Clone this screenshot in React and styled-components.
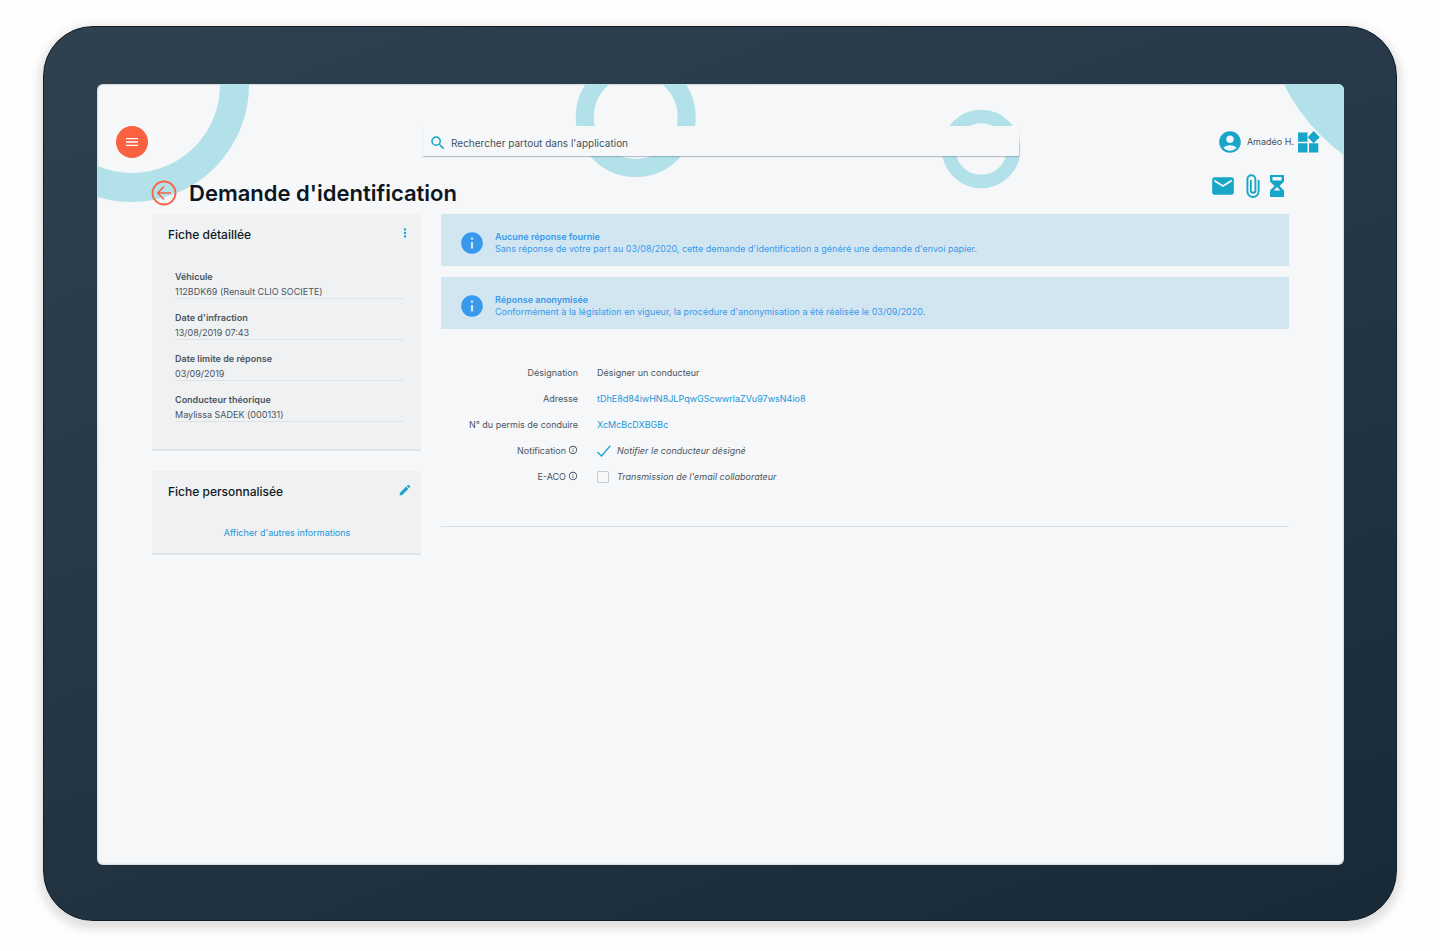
import React from "react";
import styled, { createGlobalStyle } from "styled-components";
import {
  MdAccountCircle,
  MdEdit,
  MdEmail,
  MdInfo,
  MdInfoOutline,
  MdMenu,
  MdMoreVert,
  MdSearch,
} from "react-icons/md";

const vehicleInfos = [
  { label: "Véhicule", value: "112BDK69 (Renault CLIO SOCIETE)" },
  { label: "Date d'infraction", value: "13/08/2019 07:43" },
  { label: "Date limite de réponse", value: "03/09/2019" },
  { label: "Conducteur théorique", value: "Maylissa SADEK (000131)" },
];

const alerts = [
  {
    title: "Aucune réponse fournie",
    text: "Sans réponse de votre part au 03/08/2020, cette demande d'identification a généré une demande d'envoi papier.",
  },
  {
    title: "Réponse anonymisée",
    text: "Conformément à la législation en vigueur, la procédure d'anonymisation a été réalisée le 03/09/2020.",
  },
];

export default function App() {
  return (
    <Page>
      <GlobalStyle />
      <Tablet>
        <Screen>
          <Rings />
          <TopBar />
          <TitleRow>
            <BackButton type="button" aria-label="Retour">
              <BackIcon />
            </BackButton>
            <Title>Demande d'identification</Title>
            <Actions>
              <IconButton type="button" aria-label="Messages">
                <MdEmail size={26} />
              </IconButton>
              <IconButton type="button" aria-label="Pièces jointes">
                <Paperclip />
              </IconButton>
              <IconButton type="button" aria-label="En attente">
                <Hourglass />
              </IconButton>
            </Actions>
          </TitleRow>
          <Content>
            <Sidebar>
              <DetailCard />
              <CustomCard />
            </Sidebar>
            <Main>
              {alerts.map((alert) => (
                <Alert key={alert.title}>
                  <MdInfo size={26} />
                  <div>
                    <AlertTitle>{alert.title}</AlertTitle>
                    <AlertText>{alert.text}</AlertText>
                  </div>
                </Alert>
              ))}
              <RequestForm />
            </Main>
          </Content>
        </Screen>
      </Tablet>
    </Page>
  );
}

function TopBar() {
  return (
    <Bar>
      <MenuButton type="button" aria-label="Menu">
        <MdMenu size={16} />
      </MenuButton>
      <Search>
        <MdSearch size={18} />
        <SearchInput
          type="search"
          aria-label="Recherche"
          placeholder="Rechercher partout dans l'application"
        />
      </Search>
      <User>
        <MdAccountCircle size={26} />
        <UserName>Amadéo H.</UserName>
        <IconButton type="button" aria-label="Applications">
          <Widgets />
        </IconButton>
      </User>
    </Bar>
  );
}

function DetailCard() {
  return (
    <Card>
      <CardHeader>
        <CardTitle>Fiche détaillée</CardTitle>
        <IconButton type="button" aria-label="Options">
          <MdMoreVert size={14} />
        </IconButton>
      </CardHeader>
      <InfoList>
        {vehicleInfos.map((info) => (
          <InfoItem key={info.label}>
            <InfoLabel>{info.label}</InfoLabel>
            <InfoValue>{info.value}</InfoValue>
          </InfoItem>
        ))}
      </InfoList>
    </Card>
  );
}

function CustomCard() {
  return (
    <Card>
      <CardHeader>
        <CardTitle>Fiche personnalisée</CardTitle>
        <IconButton type="button" aria-label="Modifier">
          <MdEdit size={14} />
        </IconButton>
      </CardHeader>
      <MoreLink href="#infos">Afficher d'autres informations</MoreLink>
    </Card>
  );
}

function RequestForm() {
  return (
    <Form>
      <FormLabel>Désignation</FormLabel>
      <FormValue>Désigner un conducteur</FormValue>
      <FormLabel>Adresse</FormLabel>
      <FormValue $accent>tDhE8d84iwHN8JLPqwGScwwrlaZVu97wsN4io8</FormValue>
      <FormLabel>N° du permis de conduire</FormLabel>
      <FormValue $accent>XcMcBcDXBGBc</FormValue>
      <FormLabel>
        Notification <MdInfoOutline size={10} />
      </FormLabel>
      <Option>
        <CheckSlot>
          <Checkbox type="checkbox" defaultChecked />
          <CheckMark />
        </CheckSlot>
        Notifier le conducteur désigné
      </Option>
      <FormLabel>
        E-ACO <MdInfoOutline size={10} />
      </FormLabel>
      <Option>
        <CheckSlot>
          <Checkbox type="checkbox" />
        </CheckSlot>
        Transmission de l'email collaborateur
      </Option>
    </Form>
  );
}

// Decorative circles behind the header
function Rings() {
  return (
    <Backdrop aria-hidden="true">
      <circle cx="35" cy="1" r="102.5" strokeWidth="29" />
      <circle cx="43.2%" cy="33" r="51" strokeWidth="18" />
      <circle cx="70.9%" cy="65" r="32.5" strokeWidth="13.5" />
      <svg x="100%" overflow="visible">
        <circle cx="116" cy="-88" r="177" strokeWidth="40" />
        <circle cx="116" cy="-88" r="158" fill="#b2e1e9" />
      </svg>
    </Backdrop>
  );
}

function BackIcon() {
  return (
    <svg width="26" height="26" viewBox="0 0 26 26" fill="none" stroke="currentColor">
      <circle cx="13" cy="13" r="11.5" strokeWidth="1.8" />
      <path d="M20 13H7M13 6.5L6.8 13L13 19.5" strokeWidth="1.7" />
    </svg>
  );
}

function Paperclip() {
  return (
    <svg width="14" height="24" viewBox="0 0 14 24" fill="none" stroke="currentColor">
      <path
        d="M12.6 6V17.4A5.6 5.6 0 0 1 1.4 17.4V5.2A3.9 3.9 0 0 1 9.4 5.2V16.4A2.3 2.3 0 0 1 4.8 16.4V6"
        strokeWidth="1.9"
      />
    </svg>
  );
}

function Hourglass() {
  return (
    <svg width="14" height="22" viewBox="0 0 14 22" fill="currentColor">
      <path
        fillRule="evenodd"
        d="M0 0H14V6.5L9.5 11L14 15.5V22H0V15.5L4.5 11L0 6.5ZM2.5 2V5.5H11.5V2ZM7 12L3.6 15.6H10.4Z"
      />
    </svg>
  );
}

function Widgets() {
  return (
    <svg width="22" height="22" viewBox="0 0 22 22" fill="currentColor">
      <path d="M0 1.5H9.5V10.8H0ZM0 12.2H9.5V21.5H0ZM11 12.2H20.3V21.5H11ZM15.6 0L21.8 6.2L15.6 12.2L9.8 6.2Z" />
    </svg>
  );
}

function CheckMark() {
  return (
    <svg width="14" height="12" viewBox="0 0 14 12" fill="none" stroke="#1a9fd0">
      <path d="M0.5 7.2L4.6 11L13.3 0.6" strokeWidth="1.4" />
    </svg>
  );
}

const GlobalStyle = createGlobalStyle`
  * {
    box-sizing: border-box;
  }
  body {
    margin: 0;
    background: #fefefe;
    color: #4a5560;
    font-family: Inter, "Open Sans", sans-serif;
    font-size: 9px;
    line-height: 12px;
  }
  button {
    display: flex;
    padding: 0;
    border: 0;
    background: none;
    cursor: pointer;
  }
  svg {
    display: block;
    flex-shrink: 0;
  }
`;

const Page = styled.div`
  min-height: 100vh;
  padding: 26px 43px 30px;
`;

const Tablet = styled.div`
  padding: 57px 52px 55px 53px;
  border: 1px solid #101c26;
  border-radius: 50px;
  background: linear-gradient(160deg, #2f404f, #263847 45%, #1e303d 75%, #182a37);
  box-shadow: 0 4px 10px 4px rgba(0, 0, 0, 0.12);
`;

const Screen = styled.div`
  position: relative;
  min-height: calc(100vh - 170px);
  padding-top: 42px;
  overflow: hidden;
  border-radius: 6px;
  background: #f5f7f9;
  box-shadow: inset 0 0 2px #8d99a3;
`;

const Backdrop = styled.svg`
  position: absolute;
  top: 0;
  left: 0;
  width: 100%;
  height: 120px;
  fill: none;
  stroke: #b2e1e9;
`;

const Bar = styled.header`
  position: relative;
  display: grid;
  grid-template-columns: 51fr 99fr 50fr;
  align-items: center;
  height: 32px;
  padding: 0 24px 0 19px;
`;

const MenuButton = styled.button`
  align-items: center;
  justify-content: center;
  width: 32px;
  height: 32px;
  border-radius: 50%;
  background: #fa6141;
  color: #fff;
`;

const Search = styled.label`
  display: flex;
  align-self: start;
  align-items: center;
  gap: 4px;
  height: 30px;
  padding: 4px 6px 0;
  background: #f5f7f9;
  box-shadow: 0 1px 1px rgba(70, 90, 120, 0.35);
  color: #17a6c8;
`;

const SearchInput = styled.input`
  flex: 1;
  padding: 0;
  border: 0;
  outline: 0;
  background: none;
  font: inherit;
  font-size: 10px;

  &::placeholder {
    color: #46515c;
    opacity: 1;
  }
`;

const User = styled.div`
  display: flex;
  align-items: center;
  justify-content: flex-end;
  gap: 4px;
  color: #17a6c8;
`;

const UserName = styled.span`
  color: #46515c;
`;

const IconButton = styled.button`
  color: #17a6c8;
`;

const TitleRow = styled.div`
  position: relative;
  display: flex;
  align-items: center;
  height: 56px;
  padding: 14px 60px 0 54px;
`;

const BackButton = styled.button`
  color: #fa6141;
`;

const Title = styled.h1`
  margin: 0 0 0 12px;
  color: #0d1620;
  font-size: 22px;
  font-weight: 600;
  line-height: 28px;
`;

const Actions = styled.div`
  display: flex;
  align-items: center;
  gap: 10px;
  margin: 0 0 14px auto;
`;

const Content = styled.div`
  position: relative;
  display: flex;
  gap: 20px;
  padding: 0 55px;
`;

const Sidebar = styled.aside`
  display: flex;
  flex: 0 0 269px;
  flex-direction: column;
  gap: 20px;
`;

const Card = styled.section`
  padding: 12px 9px 14px 16px;
  border-bottom: 2px solid #e2e6e9;
  background: #eff1f3;
`;

const CardHeader = styled.div`
  display: flex;
  justify-content: space-between;
`;

const CardTitle = styled.h2`
  margin: 0;
  color: #0f1a24;
  font-size: 12px;
  font-weight: 500;
  line-height: 18px;
`;

const InfoList = styled.dl`
  margin: 27px 8px 13px 7px;
`;

const InfoItem = styled.div`
  margin-bottom: 13px;
  border-bottom: 1px solid #dde3e7;
`;

const InfoLabel = styled.dt`
  font-weight: 600;
`;

const InfoValue = styled.dd`
  margin: 3px 0 0;
`;

const MoreLink = styled.a`
  display: block;
  margin-top: 26px;
  padding-right: 6px;
  color: #2196d8;
  text-align: center;
  text-decoration: none;
`;

const Main = styled.main`
  flex: 1;
`;

const Alert = styled.section`
  display: flex;
  align-items: center;
  gap: 10px;
  height: 52px;
  margin-bottom: 11px;
  padding: 6px 18px 0;
  background: #d2e6f1;
  color: #3899ec;
`;

const AlertTitle = styled.h3`
  margin: 0;
  font-size: 9px;
  font-weight: 600;
`;

const AlertText = styled.p`
  margin: 0;
`;

const Form = styled.form`
  display: grid;
  grid-template-columns: 137px 1fr;
  grid-auto-rows: 26px;
  align-items: center;
  column-gap: 19px;
  padding: 20px 0 36px;
  border-bottom: 1px solid #d8dfe4;
`;

const FormLabel = styled.span`
  display: flex;
  justify-content: flex-end;
  gap: 2px;
`;

const FormValue = styled.span`
  color: ${(props) => (props.$accent ? "#2196d8" : "inherit")};
`;

const Option = styled.label`
  display: flex;
  align-items: center;
  gap: 6px;
  font-style: italic;
`;

const CheckSlot = styled.span`
  display: grid;
  align-items: center;
  width: 14px;

  > * {
    grid-area: 1 / 1;
  }
`;

const Checkbox = styled.input`
  width: 12px;
  height: 12px;
  margin: 0;
  border: 1px solid #c3ccd3;
  border-radius: 1px;
  appearance: none;

  &:checked {
    border-color: transparent;
  }

  &:not(:checked) + svg {
    visibility: hidden;
  }
`;
